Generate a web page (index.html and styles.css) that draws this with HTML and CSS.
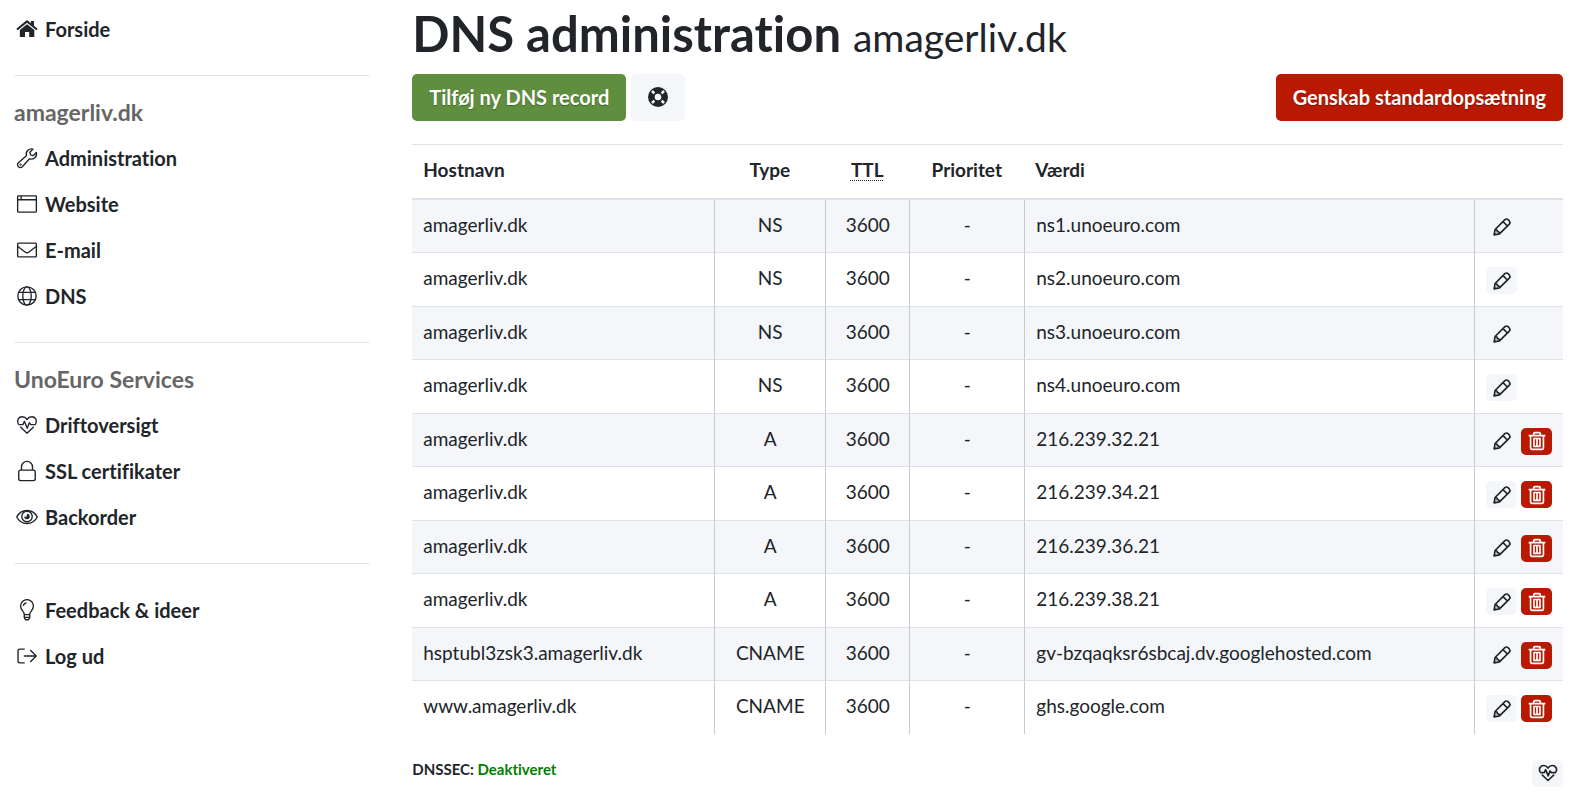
FILE: index.html
```html
<!DOCTYPE html>
<html lang="da">
<head>
<meta charset="utf-8">
<title>DNS administration</title>
<link rel="stylesheet" href="styles.css">
</head>
<body>
<svg class="sprite" aria-hidden="true">
  <symbol id="home" viewBox="0 0 24 24"><path fill="currentColor" stroke="none" d="M12 2.2 16.2 5.6V3.4h3.4v5l4 3.2-1.4 1.7L12 5.1 1.8 13.3.4 11.6z"/><path fill="currentColor" stroke="none" d="M12 6.8 20 13.2V20.6h-5.6v-5.2H9.8v5.2H4.2v-7.4z"/></symbol>
  <symbol id="wrench" viewBox="0 0 24 24"><path d="M18.6 2.3a5.8 5.8 0 0 0-7.2 7.3L2.6 17.2a3 3 0 1 0 4.3 4.3l7.8-8.6a5.8 5.8 0 0 0 7.5-7l-3.4 3.5-2.9-.8-.8-2.9z"/><circle cx="5" cy="19.2" r=".5"/></symbol>
  <symbol id="window" viewBox="0 0 24 24"><rect x="1.8" y="3.2" width="20.4" height="17.6" rx=".8"/><path d="M2 7.4h20M5.6 3.4v3.8"/></symbol>
  <symbol id="mail" viewBox="0 0 24 24"><rect x="1.8" y="4.5" width="20.4" height="15" rx="1"/><path d="M2 8.2l8.2 6.2q1.8 1.3 3.6 0L22 8.2"/></symbol>
  <symbol id="globe" viewBox="0 0 24 24"><circle cx="12" cy="12" r="10"/><ellipse cx="12" cy="12" rx="4.6" ry="10"/><path d="M3.2 8h17.6M3.2 16h17.6"/></symbol>
  <symbol id="heart" viewBox="0 0 24 24"><path d="M2.5 11C.4 6.6 3 3 6.8 3c2.400 0 4 1.200 5.200 3C13.200 4.200 14.800 3 17.200 3c3.800 0 6.400 3.600 4.300 8M4.600 14 12 21l7.400-7M2.500 11.600h5L9.200 8l3 7.500 2.300-6 1.600 2.100h5.500"/></symbol>
  <symbol id="lock" viewBox="0 0 24 24"><rect x="3" y="11" width="18" height="11.500" rx="2"/><path d="M6 11V7.500a6 6 0 0 1 12 0V11"/></symbol>
  <symbol id="eye" viewBox="0 0 24 24"><path d="M.8 12C5.500 2.500 18.500 2.500 23.200 12 18.500 21.500 5.500 21.500.8 12z"/><circle cx="12" cy="11.500" r="5.700"/><path fill="currentColor" stroke="none" d="M12 8.500a3 3 0 1 1-3 3l2.600.2z"/></symbol>
  <symbol id="bulb" viewBox="0 0 24 24"><path d="M9 17c0-3.500-4-4.800-4-9.300a7 7 0 0 1 14 0c0 4.500-4 5.800-4 9.300zM9.200 20h5.600M10.200 22.700h3.600M9 17v3.300l1.500 2.400M15 17v3.300l-1.500 2.400M8 7.500a4 4 0 0 1 3.500-3.300"/></symbol>
  <symbol id="logout" viewBox="0 0 24 24"><path d="M9.500 4.500H4.200Q2.200 4.500 2.200 6.500v11q0 2 2 2h5.300M8.500 12h13.500M15.500 5.500 22 12l-6.500 6.500"/></symbol>
  <symbol id="ring" viewBox="0 0 24 24"><circle cx="12" cy="12" r="8" stroke-width="8"/><path d="M4.800 4.800l2.800 2.800M19.200 4.800l-2.800 2.800M4.800 19.200l2.800-2.800M19.200 19.200l-2.800-2.800" stroke="#f4f6fa" stroke-width="3"/></symbol>
  <symbol id="pencil" viewBox="0 0 24 24"><path d="M2.600 21.400 3.700 15 15.500 3.200Q17.400 1.600 19.200 3.200L20.800 4.800Q22.400 6.600 20.800 8.500L9 20.300zM13.200 5.500l5.300 5.300M3.700 15q2.700-.3 2.700 2.600 2.900 0 2.600 2.700"/><path fill="currentColor" stroke="none" d="M2 22l.6-3.600 3 3z"/></symbol>
  <symbol id="trash" viewBox="0 0 24 24"><path d="M2 5.500h20M8 5V3.500Q8 2 9.500 2h5Q16 2 16 3.500V5M4.300 6v14.500Q4.300 22 5.800 22h12.400q1.500 0 1.500-1.500V6M8.400 9v9.500h7.200V9zM12 9v9.500"/></symbol>
</svg>
<div class="page">
  <nav class="sidebar">
    <a class="nav-item" href="#"><svg class="icon"><use href="#home"/></svg>Forside</a>
    <hr>
    <h2>amagerliv.dk</h2>
    <a class="nav-item" href="#"><svg class="icon"><use href="#wrench"/></svg>Administration</a>
    <a class="nav-item" href="#"><svg class="icon"><use href="#window"/></svg>Website</a>
    <a class="nav-item" href="#"><svg class="icon"><use href="#mail"/></svg>E-mail</a>
    <a class="nav-item" href="#"><svg class="icon"><use href="#globe"/></svg>DNS</a>
    <hr>
    <h2>UnoEuro Services</h2>
    <a class="nav-item" href="#"><svg class="icon"><use href="#heart"/></svg>Driftoversigt</a>
    <a class="nav-item" href="#"><svg class="icon"><use href="#lock"/></svg>SSL certifikater</a>
    <a class="nav-item" href="#"><svg class="icon"><use href="#eye"/></svg>Backorder</a>
    <hr>
    <a class="nav-item" href="#"><svg class="icon"><use href="#bulb"/></svg>Feedback &amp; ideer</a>
    <a class="nav-item" href="#"><svg class="icon"><use href="#logout"/></svg>Log ud</a>
  </nav>
  <main>
    <h1>DNS administration <small>amagerliv.dk</small></h1>
    <div class="toolbar">
      <button class="btn btn-green" type="button">Tilføj ny DNS record</button>
      <button class="btn btn-light" type="button" aria-label="Hjælp"><svg class="icon"><use href="#ring"/></svg></button>
      <button class="btn btn-red btn-end" type="button">Genskab standardopsætning</button>
    </div>
    <table>
      <colgroup><col class="c-host"><col class="c-type"><col class="c-ttl"><col class="c-prio"><col><col class="c-act"></colgroup>
      <thead>
        <tr><th>Hostnavn</th><th>Type</th><th><abbr title="Time To Live">TTL</abbr></th><th>Prioritet</th><th>Værdi</th><th></th></tr>
      </thead>
      <tbody id="records"></tbody>
    </table>
    <footer>
      <div class="dnssec">DNSSEC: <span class="off">Deaktiveret</span></div>
      <button class="btn-sm btn-light" type="button" aria-label="Status"><svg class="icon"><use href="#heart"/></svg></button>
    </footer>
  </main>
</div>
<script src="records.js"></script>
</body>
</html>
```
FILE: styles.css
```css
* { box-sizing: border-box; }

body {
  margin: 0;
  padding: 0 16px 0 14px;
  background: #fff;
  color: #212529;
  font: 19px/1.5 Lato, "Open Sans", sans-serif;
  font-variant-ligatures: none;
}

.sprite { position: absolute; width: 0; height: 0; }

.icon {
  width: 22px;
  height: 22px;
  flex: none;
  fill: none;
  stroke: currentColor;
  stroke-width: 1.5;
  stroke-linejoin: round;
}

.page {
  display: grid;
  grid-template-columns: 23% minmax(0, 1fr);
  gap: 42px;
}

.sidebar { padding-top: 6px; }

.sidebar hr {
  margin: 23px 0;
  border: 0;
  border-top: 1px solid #e4e4e4;
}

.sidebar h2 {
  margin: 0 0 10px;
  color: #666;
  font-size: 23px;
  line-height: 26px;
  font-weight: 700;
}

.nav-item {
  display: flex;
  align-items: center;
  gap: 7px;
  height: 46px;
  padding-left: 2px;
  color: inherit;
  font-size: 20px;
  font-weight: 700;
  text-decoration: none;
}

h1 {
  margin: 0;
  padding-top: 5px;
  font-size: 49px;
  line-height: 56px;
  font-weight: 700;
}

h1 small {
  font-size: 39px;
  line-height: 40px;
  font-weight: 400;
}

.toolbar {
  display: flex;
  gap: 5px;
  margin: 13px 0 23px;
}

.btn,
.btn-sm {
  display: flex;
  align-items: center;
  justify-content: center;
  border: 0;
  border-radius: 5px;
  font: inherit;
  font-weight: 700;
  color: inherit;
}

.btn { height: 47px; padding: 0 17px 2px; font-size: 20px; }
.btn .icon { width: 20px; height: 20px; }
.btn-light { background: #f4f6fa; }
.btn-green { background: #5f8f3e; color: #fff; text-shadow: 0 1px 1px rgba(0, 0, 0, .3); }
.btn-red { background: #b81900; color: #fff; text-shadow: 0 1px 1px rgba(0, 0, 0, .3); }
.btn-end { margin-left: auto; }

.btn-sm { width: 31px; height: 27px; padding: 0; }
.btn-sm .icon { width: 20px; height: 20px; stroke-width: 2; }

table {
  width: 100%;
  table-layout: fixed;
  border-collapse: separate;
  border-spacing: 0;
}

.c-host { width: 302px; }
.c-type { width: 111px; }
.c-ttl { width: 84px; }
.c-prio { width: 115px; }
.c-act { width: 89px; }

th,
td { padding: 11px 11px 13px; text-align: left; vertical-align: middle; }

th {
  height: 55px;
  border-top: 1px solid #dee2e6;
  border-bottom: 2px solid #dee2e6;
  font-weight: 700;
}

td { border-top: 1px solid #dee2e6; }
tr:first-child td { border-top: 0; }
td + td { border-left: 1px solid #c8cacd; }
td:last-child { padding: 14px 11px 11px; }
tbody tr:nth-child(odd) { background: #f4f6fa; }

th:nth-child(n+2):nth-child(-n+4),
td:nth-child(n+2):nth-child(-n+4) { text-align: center; }

abbr { text-decoration: underline dotted 1px; text-underline-offset: 3px; }

.actions { display: flex; gap: 4px; }

footer {
  display: flex;
  justify-content: space-between;
  align-items: flex-start;
  padding-top: 26px;
}

.dnssec { font-size: 15px; line-height: 18px; font-weight: 700; }
.off { color: #008000; }
```
FILE: records.js
```js
const records = [
  ["amagerliv.dk", "NS", "ns1.unoeuro.com"],
  ["amagerliv.dk", "NS", "ns2.unoeuro.com"],
  ["amagerliv.dk", "NS", "ns3.unoeuro.com"],
  ["amagerliv.dk", "NS", "ns4.unoeuro.com"],
  ["amagerliv.dk", "A", "216.239.32.21"],
  ["amagerliv.dk", "A", "216.239.34.21"],
  ["amagerliv.dk", "A", "216.239.36.21"],
  ["amagerliv.dk", "A", "216.239.38.21"],
  ["hsptubl3zsk3.amagerliv.dk", "CNAME", "gv-bzqaqksr6sbcaj.dv.googlehosted.com"],
  ["www.amagerliv.dk", "CNAME", "ghs.google.com"]
];

const button = (style, label, icon) =>
  `<button class="btn-sm ${style}" type="button" aria-label="${label}"><svg class="icon"><use href="#${icon}"/></svg></button>`;

document.getElementById("records").innerHTML = records.map(([host, type, value]) => `
  <tr><td>${host}</td><td>${type}</td><td>3600</td><td>-</td><td>${value}</td>
  <td><div class="actions">${button("btn-light", "Rediger", "pencil")}${type === "NS" ? "" : button("btn-red", "Slet", "trash")}</div></td></tr>`).join("");
```
